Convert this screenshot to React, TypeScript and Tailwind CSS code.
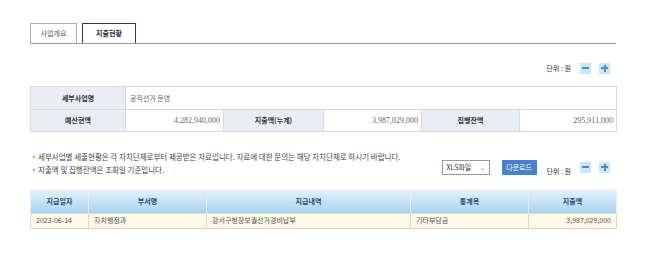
import React from "react";

const kr = "font-['Noto_Sans_CJK_KR','Noto_Sans',sans-serif]";

function PmButtons() {
  return (
    <div className="flex items-center gap-[8px]">
      <div className="w-[11px] h-[11px] bg-[#cfe5f5] flex items-center justify-center">
        <div className="w-[7px] h-[2px] bg-[#3f8fd3]" />
      </div>
      <div className="w-[11px] h-[11px] bg-[#cfe5f5] flex items-center justify-center relative">
        <div className="w-[7px] h-[2px] bg-[#3f8fd3]" />
        <div className="absolute w-[2px] h-[7px] bg-[#3f8fd3]" />
      </div>
    </div>
  );
}

function Unit() {
  return <span className="text-[7px] text-[#333] leading-none">단위 : 원</span>;
}

export default function App() {
  const thA = "bg-[#e9eef5] border border-[#d6d9de] font-bold text-[#333] text-center text-[7px]";
  const tdA = "border border-[#d6d9de] text-[#666] text-[7px] px-[3px]";
  const th2 = "border-x border-[#e6f0f8] font-bold text-[#2a4a72] text-center text-[7px] bg-gradient-to-b from-[#e6f3fc] to-[#a9d3f0]";
  const td2 = "border border-[#e0d8c0] text-[#555] text-[7px] px-[5px] bg-[#fdf8e7]";
  return (
    <div className={`w-[658px] h-[256px] bg-white ${kr}`}>
      <div className="w-[586px] ml-[30px] pt-[23px]">
        {/* tabs */}
        <div className="flex items-end gap-[5px] border-b border-[#9a9a9a] h-[21px]">
          <div className="w-[47px] h-[20px] border border-b-0 border-[#aaaaaa] flex items-center justify-center text-[7px] text-[#555]">
            사업개요
          </div>
          <div className="w-[54px] h-[20px] border border-b-0 border-[#2e3a55] flex items-center justify-center text-[7px] font-bold text-[#1f2a44]">
            지출현황
          </div>
        </div>

        {/* unit row 1 */}
        <div className="flex items-center justify-end gap-[9px] pr-[6px] mt-[18px] h-[12px]">
          <Unit />
          <PmButtons />
        </div>

        {/* table 1 */}
        <table className="mt-[12px] w-[586px] table-fixed border-collapse">
          <colgroup>
            <col className="w-[95px]" />
            <col className="w-[98px]" />
            <col className="w-[100px]" />
            <col className="w-[98px]" />
            <col className="w-[98px]" />
            <col className="w-[97px]" />
          </colgroup>
          <tbody>
            <tr className="h-[23px]">
              <th className={thA}>세부사업명</th>
              <td className={`${tdA} px-[4px]`} colSpan={5}>공직선거 운영</td>
            </tr>
            <tr className="h-[22px]">
              <th className={thA}>예산현액</th>
              <td className={`${tdA} text-right font-['Liberation_Serif',serif] text-[8px]`}>4,282,940,000</td>
              <th className={thA}>지출액(누계)</th>
              <td className={`${tdA} text-right font-['Liberation_Serif',serif] text-[8px]`}>3,987,029,000</td>
              <th className={thA}>집행잔액</th>
              <td className={`${tdA} text-right font-['Liberation_Serif',serif] text-[8px]`}>295,911,000</td>
            </tr>
          </tbody>
        </table>

        {/* notes + controls */}
        <div className="flex justify-between items-end mt-[20px]">
          <div className="flex flex-col gap-[4px] pl-[3px] text-[7.5px] text-[#444] leading-[9px]">
            <div className="flex items-center gap-[3px]">
              <span className="w-[2px] h-[2px] bg-[#f0a030]" />
              <span>세부사업별 세출현황은 각 자치단체로부터 제공받은 자료입니다. 자료에 대한 문의는 해당 자치단체로 하시기 바랍니다.</span>
            </div>
            <div className="flex items-center gap-[3px]">
              <span className="w-[2px] h-[2px] bg-[#f0a030]" />
              <span>지출액 및 집행잔액은 조회일 기준입니다.</span>
            </div>
          </div>
          <div className="flex items-center pr-[6px] mb-[-5px]">
            <div className="w-[48px] h-[15px] border border-[#999] flex items-center justify-between px-[4px] text-[7px] text-[#333]">
              <span>XLS파일</span>
              <span className="text-[6px] text-[#666]">⌄</span>
            </div>
            <div className="ml-[12px] w-[35px] h-[15px] bg-[#4a80c8] rounded-[1px] flex items-center justify-center text-[7px] text-white">
              다운로드
            </div>
            <div className="ml-[10px] mr-[9px]"><Unit /></div>
            <PmButtons />
          </div>
        </div>

        {/* table 2 */}
        <table className="mt-[15px] w-[586px] table-fixed border-collapse">
          <colgroup>
            <col className="w-[58px]" />
            <col className="w-[118px]" />
            <col className="w-[204px]" />
            <col className="w-[118px]" />
            <col className="w-[88px]" />
          </colgroup>
          <thead>
            <tr className="h-[24px]">
              <th className={th2}>지급일자</th>
              <th className={th2}>부서명</th>
              <th className={th2}>지급내역</th>
              <th className={th2}>통계목</th>
              <th className={th2}>지출액</th>
            </tr>
          </thead>
          <tbody>
            <tr className="h-[15px]">
              <td className={td2}>2023-06-14</td>
              <td className={td2}>자치행정과</td>
              <td className={td2}>강서구청장보궐선거경비납부</td>
              <td className={td2}>기타부담금</td>
              <td className={`${td2} text-right px-[3px]`}>3,987,029,000</td>
            </tr>
          </tbody>
        </table>
      </div>
    </div>
  );
}
